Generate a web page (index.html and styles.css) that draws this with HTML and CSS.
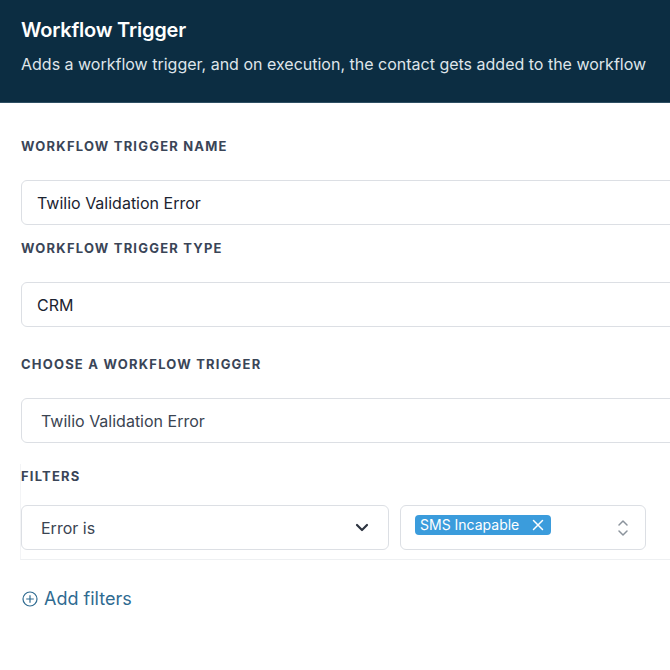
FILE: index.html
```html
<!DOCTYPE html>
<html>
<head>
<meta charset="utf-8">
<link rel="stylesheet" href="styles.css">
</head>
<body>
<header class="header">
  <h1 class="title">Workflow Trigger</h1>
  <p class="subtitle">Adds a workflow trigger, and on execution, the contact gets added to the workflow</p>
</header>
<main class="form">
  <div class="label l1">WORKFLOW TRIGGER NAME</div>
  <div class="field">Twilio Validation Error</div>
  <div class="label l2">WORKFLOW TRIGGER TYPE</div>
  <div class="field">CRM</div>
  <div class="label l3">CHOOSE A WORKFLOW TRIGGER</div>
  <div class="field field-soft">Twilio Validation Error</div>
  <section class="filters">
    <div class="label l4">FILTERS</div>
    <div class="filter-row">
      <div class="select select-main">
        <span>Error is</span>
        <svg class="chev" width="14" height="9" viewBox="0 0 14 9"><path d="M2 2l5 5 5-5" fill="none" stroke="#2d3440" stroke-width="2.2" stroke-linecap="round" stroke-linejoin="round"/></svg>
      </div>
      <div class="select select-multi">
        <span class="tag">SMS Incapable
          <svg class="tag-x" width="12" height="12" viewBox="0 0 12 12"><path d="M1.5 1.5l9 9M10.5 1.5l-9 9" stroke="#fff" stroke-width="1.5" stroke-linecap="round"/></svg>
        </span>
        <svg class="updown" width="12" height="20" viewBox="0 0 12 20"><path d="M2 7l4-4 4 4M2 13l4 4 4-4" fill="none" stroke="#8b939c" stroke-width="1.5" stroke-linecap="round" stroke-linejoin="round"/></svg>
      </div>
    </div>
  </section>
  <div class="add">
    <svg width="16" height="16" viewBox="0 0 16 16"><circle cx="8" cy="8" r="7" fill="none" stroke="#2f6b91" stroke-width="1.2"/><path d="M8 4.2v7.6M4.2 8h7.6" stroke="#2f6b91" stroke-width="1.2"/></svg>
    <span>Add filters</span>
  </div>
</main>
</body>
</html>
```
FILE: styles.css
```css
html, body {
  margin: 0;
  padding: 0;
  overflow: hidden;
  background: #ffffff;
  font-family: Inter, "Noto Sans", "Liberation Sans", sans-serif;
}
.header {
  height: 103px;
  box-sizing: border-box;
  background: #0c2d42;
  border-bottom: 1px solid #2e4f63;
  padding: 18px 21px 0;
}
.title {
  margin: 0;
  color: #ffffff;
  font-size: 20px;
  font-weight: 600;
  line-height: 24px;
  letter-spacing: -0.2px;
}
.subtitle {
  margin: 12px 0 0;
  color: #dfe5ea;
  font-size: 16px;
  line-height: 20px;
  white-space: nowrap;
}
.form {
  padding-left: 21px;
  width: 700px;
}
.label {
  font-size: 13px;
  font-weight: 700;
  line-height: 16px;
  letter-spacing: 1.2px;
  color: #3a4557;
}
.l1 { margin-top: 35px; }
.l2 { margin-top: 15px; }
.l3 { margin-top: 29px; }
.l4 { padding-top: 4px; }
.field {
  margin-top: 26px;
  height: 45px;
  box-sizing: border-box;
  border: 1px solid #dcdfe4;
  border-radius: 6px;
  padding-left: 15px;
  display: flex;
  align-items: center;
  font-size: 16px;
  color: #1c2330;
}
.field-soft {
  padding-left: 19px;
  color: #3a4452;
}
.filters {
  margin-top: 21px;
  margin-left: -1px;
  border-left: 1px solid #f3f4f6;
  border-bottom: 1px solid #eef0f2;
  padding-bottom: 9px;
}
.filter-row {
  margin-top: 21px;
  display: flex;
  gap: 11px;
}
.select {
  height: 45px;
  box-sizing: border-box;
  border: 1px solid #dcdfe4;
  border-radius: 6px;
  display: flex;
  align-items: center;
}
.select-main {
  width: 368px;
  padding: 0 19px 0 19px;
  justify-content: space-between;
  font-size: 16px;
  color: #3a4452;
}
.select-multi {
  width: 246px;
  padding: 0 16px 0 14px;
  justify-content: space-between;
  align-items: flex-start;
}
.tag {
  margin-top: 9px;
  height: 20px;
  width: 136px;
  box-sizing: border-box;
  background: #3b9cdc;
  border-radius: 4px;
  color: #ffffff;
  font-size: 14px;
  line-height: 20px;
  padding-left: 5px;
  display: flex;
  align-items: center;
  gap: 13px;
}
.updown {
  align-self: center;
}
.add {
  margin-top: 27px;
  display: flex;
  align-items: center;
  gap: 6px;
  color: #2f6b91;
  font-size: 18px;
  line-height: 24px;
  margin-left: 1px;
}
```
